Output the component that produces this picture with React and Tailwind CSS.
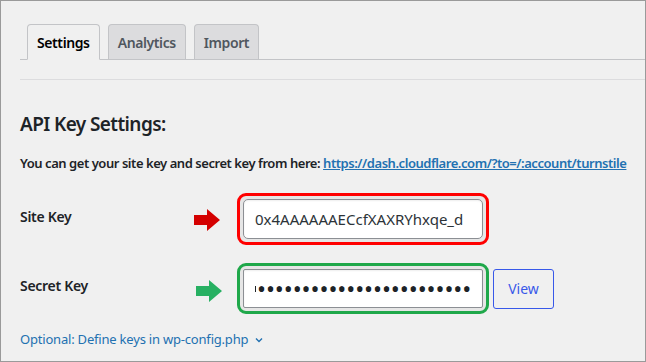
import React from "react";

function Arrow({ color }) {
  return (
    <svg width="26" height="22" viewBox="0 0 26 22">
      <polygon points="0,6 13,6 13,0 26,11 13,22 13,16 0,16" fill={color} />
    </svg>
  );
}

export default function App() {
  const font = { fontFamily: '"Segoe UI", "Noto Sans", "Open Sans", sans-serif' };
  return (
    <div
      className="w-[646px] h-[362px] bg-[#f0f0f0] border border-[#9a9a9a] overflow-hidden text-[#1d2327]"
      style={font}
    >
      <div className="pl-[19px] pt-[23px]">
        <div className="flex items-end border-b border-[#c3c4c7] pl-[7px] gap-[8px] h-[36px]">
          <div className="h-[36px] -mb-px px-[9px] flex items-center border border-[#c3c4c7] border-b-[#f0f0f0] rounded-t-[4px] bg-[#f0f0f0] text-[14px] font-semibold tracking-[-0.4px] text-[#000]">
            Settings
          </div>
          <div className="h-[35px] px-[9px] flex items-center border border-b-0 border-[#c3c4c7] rounded-t-[4px] bg-[#dcdcde] text-[14px] font-semibold tracking-[-0.4px] text-[#50575e]">
            Analytics
          </div>
          <div className="h-[35px] px-[9px] flex items-center border border-b-0 border-[#c3c4c7] rounded-t-[4px] bg-[#dcdcde] text-[14px] font-semibold tracking-[-0.4px] text-[#50575e]">
            Import
          </div>
        </div>
        <div className="h-[20px] border-b border-[#dcdcde]" />
        <h2 className="mt-[32px] text-[19px] font-semibold leading-[24px] tracking-[-0.6px] text-[#1d2327]">
          API Key Settings:
        </h2>
        <p className="mt-[18px] text-[13px] font-semibold leading-[18px] tracking-[-0.45px] whitespace-nowrap text-[#1d2327]">
          You can get your site key and secret key from here:{" "}
          <a className="text-[#2271b1] underline" href="#">
            https://dash.cloudflare.com/?to=/:account/turnstile
          </a>
        </p>
        <div className="mt-[21px] flex items-center">
          <div className="w-[174px] text-[14px] font-semibold tracking-[-0.3px] -mt-[6px]">Site Key</div>
          <div className="w-[43px] flex items-center pt-[2px]">
            <Arrow color="#d40000" />
          </div>
          <div className="border-[3px] border-[#ff0000] rounded-[9px] p-[3px] bg-[#e6e6e6]">
            <div className="w-[240px] h-[40px] border border-[#8c8f94] rounded-[5px] bg-white shadow-[inset_0_1px_2px_rgba(0,0,0,0.07)] flex items-center pl-[11px] text-[15px] text-[#2c3338]">
              0x4AAAAAAECcfXAXRYhxqe_d
            </div>
          </div>
        </div>
        <div className="mt-[18px] flex items-center">
          <div className="w-[176px] text-[14px] font-semibold tracking-[-0.3px] -mt-[6px]">Secret Key</div>
          <div className="w-[41px] flex items-center pt-[4px]">
            <Arrow color="#27b062" />
          </div>
          <div className="border-[3px] border-[#1fa84a] rounded-[9px] p-[3px] bg-[#e6e6e6]">
            <div className="w-[240px] h-[39px] border border-[#8c8f94] rounded-[2px] bg-white shadow-[inset_0_1px_2px_rgba(0,0,0,0.07)] flex items-center pl-[11px] text-[#1d2327]">
              <span className="w-[1px] h-[6px] bg-[#1d2327] mr-[1px]" />
              <span className="tracking-[-0.1px] text-[24px] leading-none">
                {"•".repeat(24)}
              </span>
            </div>
          </div>
          <button className="ml-[4px] w-[61px] h-[40px] border border-[#3858e9] rounded-[3px] text-[14px] text-[#3858e9]">
            View
          </button>
        </div>
        <div className="mt-[16px] flex items-center gap-[6px] text-[13px] tracking-[-0.2px] text-[#2271b1]">
          <span>Optional: Define keys in wp-config.php</span>
          <svg width="10" height="10" viewBox="0 0 10 10">
            <polyline points="2,3.5 5,6.5 8,3.5" fill="none" stroke="#2271b1" strokeWidth="1.4" />
          </svg>
        </div>
      </div>
    </div>
  );
}
